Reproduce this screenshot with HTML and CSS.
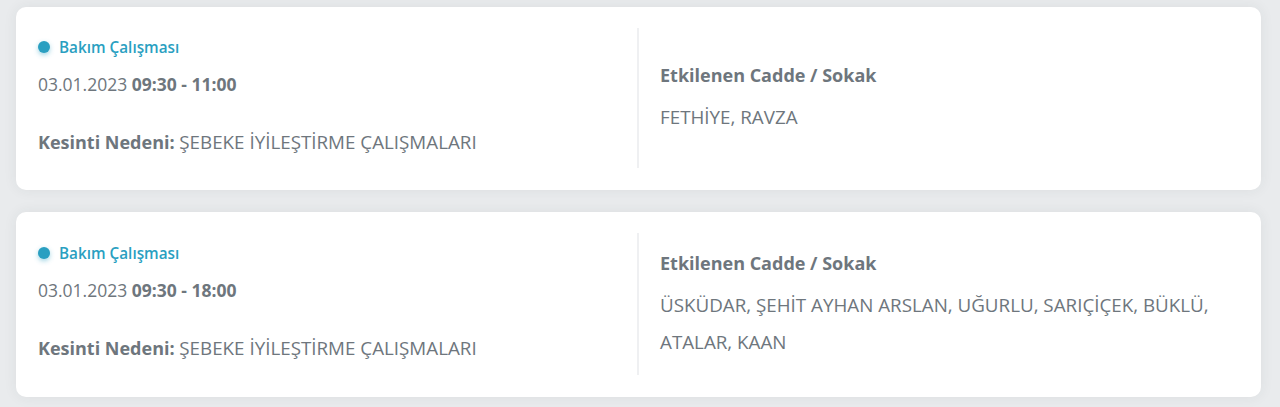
FILE: index.html
```html
<!DOCTYPE html>
<html lang="tr">
<head>
<meta charset="utf-8">
<link rel="stylesheet" href="styles.css">
</head>
<body>
<div class="list">
  <div class="card">
    <div class="left">
      <div class="tag"><span class="dot"></span>Bakım Çalışması</div>
      <div class="date">03.01.2023 <b>09:30 - 11:00</b></div>
      <div class="reason"><b>Kesinti Nedeni:</b> <span class="val">ŞEBEKE İYİLEŞTİRME ÇALIŞMALARI</span></div>
    </div>
    <div class="right">
      <div class="head">Etkilenen Cadde / Sokak</div>
      <div class="streets">FETHİYE, RAVZA</div>
    </div>
  </div>
  <div class="card">
    <div class="left">
      <div class="tag"><span class="dot"></span>Bakım Çalışması</div>
      <div class="date">03.01.2023 <b>09:30 - 18:00</b></div>
      <div class="reason"><b>Kesinti Nedeni:</b> <span class="val">ŞEBEKE İYİLEŞTİRME ÇALIŞMALARI</span></div>
    </div>
    <div class="right">
      <div class="head">Etkilenen Cadde / Sokak</div>
      <div class="streets">ÜSKÜDAR, ŞEHİT AYHAN ARSLAN, UĞURLU, SARIÇİÇEK, BÜKLÜ, ATALAR, KAAN</div>
    </div>
  </div>
</div>
</body>
</html>
```
FILE: styles.css
```css
html, body {
  margin: 0;
  padding: 0;
}
body {
  background: #e9ebed;
  font-family: "Open Sans", "Noto Sans", sans-serif;
  color: #6e767d;
  height: 407px;
  overflow: hidden;
}
.list {
  display: flex;
  flex-direction: column;
  gap: 22px;
  padding: 7px 19px 0 16px;
}
.card {
  background: #fff;
  border-radius: 10px;
  box-shadow: 0 0 14px rgba(40, 50, 60, 0.07);
  display: flex;
  padding: 21px 22px 22px 22px;
}
.left {
  width: 599px;
  height: 140px;
  display: flex;
  flex-direction: column;
}
.card + .card .left {
  height: 142px;
}
.card + .card .tag {
  margin-top: 10px;
}
.tag {
  display: flex;
  align-items: center;
  gap: 9px;
  font-size: 15.3px;
  font-weight: 600;
  line-height: 20px;
  color: #2a9fc1;
  margin-top: 9px;
}
.dot {
  width: 12px;
  height: 12px;
  border-radius: 50%;
  background: #2a9fc1;
  box-shadow: 0 2px 5px rgba(42, 159, 193, 0.45);
  flex: none;
}
.date {
  font-size: 17.5px;
  line-height: 27px;
  margin-top: 14px;
}
.reason {
  font-size: 18px;
  line-height: 27px;
  margin-top: 31px;
  white-space: nowrap;
}
.val {
  font-size: 18.8px;
}
b {
  font-weight: 700;
}
.right {
  flex: 1;
  border-left: 2px solid #eff0f2;
  padding-left: 21px;
  padding-top: 2px;
  display: flex;
  flex-direction: column;
  justify-content: center;
}
.head {
  font-size: 18px;
  font-weight: 700;
  line-height: 27px;
}
.streets {
  font-size: 18.8px;
  line-height: 37px;
  margin-top: 10px;
  max-width: 580px;
}
```
